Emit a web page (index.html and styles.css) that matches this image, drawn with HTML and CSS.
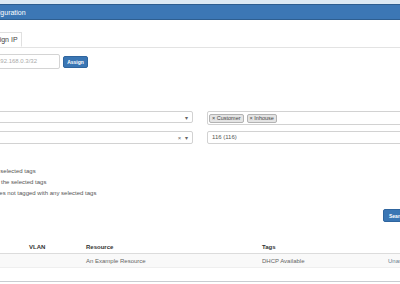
FILE: index.html
```html
<!DOCTYPE html>
<html>
<head>
<meta charset="utf-8">
<link rel="stylesheet" href="styles.css">
</head>
<body>
<div class="strip"></div>
<div class="panel">
  <div class="panel-head"><span class="title">Configuration</span></div>
  <div class="panel-body">
    <div class="tabs"><div class="tab">Assign IP</div></div>
    <div class="assign-row">
      <div class="ip-input">192.168.0.3/32</div>
      <button class="btn btn-assign">Assign</button>
    </div>
    <div class="filters">
      <div class="select"><span class="caret">▾</span></div>
      <div class="tagbox"><span class="tag">× Customer</span><span class="tag">× Inhouse</span></div>
      <div class="select select-clear"><span class="caret">× ▾</span></div>
      <div class="field">116 (116)</div>
    </div>
    <div class="radios">
      <div class="radio"><span class="dot"></span><span class="lbl">Have all selected tags</span></div>
      <div class="radio"><span class="dot"></span><span class="lbl">Some of the selected tags</span></div>
      <div class="radio"><span class="dot"></span><span class="lbl">Resources not tagged with any selected tags</span></div>
    </div>
    <div class="search-row"><button class="btn btn-search">Search</button></div>
    <table class="grid">
      <colgroup><col class="c1"><col class="c2"><col class="c3"><col class="c4"><col class="c5"></colgroup>
      <thead>
        <tr><th>IP Address</th><th>VLAN</th><th>Resource</th><th>Tags</th><th></th></tr>
      </thead>
      <tbody>
        <tr><td>192.168.0.3</td><td></td><td>An Example Resource</td><td>DHCP Available</td><td class="link">Unassign</td></tr>
      </tbody>
    </table>
  </div>
</div>
</body>
</html>
```

FILE: styles.css
```css
html, body {
  margin: 0;
  padding: 0;
  width: 400px;
  height: 284px;
  overflow: hidden;
  background: #fff;
  font-family: "Liberation Sans", Arial, sans-serif;
  color: #555;
}
.strip {
  height: 4px;
  background: #dce9f3;
}
.panel {
  border-bottom: 1px solid #c9ccd1;
  height: 278px;
  box-sizing: border-box;
}
.panel-head {
  height: 14px;
  background: #3c77b5;
  border-top: 1px solid #2e5e90;
  border-bottom: 1px solid #2e5e90;
  display: flex;
  align-items: center;
}
.title {
  color: #fff;
  font-size: 7px;
  margin-left: -16px;
}
.panel-body {
  padding-top: 12px;
}
.tabs {
  border-bottom: 1px solid #e3e3e3;
  display: flex;
  height: 15px;
}
.tab {
  margin-left: -20px;
  height: 15px;
  box-sizing: border-box;
  border: 1px solid #e0e0e0;
  border-bottom: 1px solid #fff;
  padding: 0 3px 0 7px;
  font-size: 7px;
  line-height: 14px;
  color: #444;
  background: #fff;
}
.assign-row {
  display: flex;
  align-items: center;
  gap: 3px;
  margin-top: 6px;
}
.ip-input {
  margin-left: -20px;
  width: 80px;
  height: 15px;
  box-sizing: border-box;
  border: 1px solid #d4d4d4;
  border-radius: 2px;
  font-size: 6px;
  line-height: 13px;
  padding-left: 16px;
  color: #aaa;
}
.btn {
  border: 1px solid #2f659e;
  background: #3a76b4;
  color: #fff;
  font-family: "Liberation Sans", Arial, sans-serif;
  font-weight: bold;
  border-radius: 2px;
  padding: 0;
  margin: 0;
}
.btn-assign {
  width: 25px;
  height: 12px;
  font-size: 5px;
}
.filters {
  margin-top: 42px;
  margin-left: -20px;
  width: 440px;
  display: grid;
  grid-template-columns: 1fr 1fr;
  column-gap: 14px;
  row-gap: 6px;
  align-items: start;
}
.select, .tagbox, .field {
  box-sizing: border-box;
  border: 1px solid #d2d2d2;
  border-radius: 2px;
  background: #fff;
}
.select {
  height: 12px;
  display: flex;
  justify-content: flex-end;
  align-items: center;
  padding-right: 3px;
}
.select-clear {
  height: 13px;
}
.caret {
  font-size: 6px;
  color: #666;
  letter-spacing: 1px;
}
.tagbox {
  height: 14px;
  display: flex;
  align-items: center;
  gap: 3px;
  padding-left: 1px;
}
.tag {
  font-size: 5.5px;
  line-height: 7px;
  padding: 0 2px;
  background: #e4e4e4;
  border: 1px solid #b3b3b3;
  border-radius: 2px;
  color: #444;
}
.field {
  height: 13px;
  font-size: 6px;
  line-height: 11px;
  padding-left: 4px;
  color: #555;
}
.radios {
  margin-top: 21px;
}
.radio {
  display: flex;
  align-items: center;
  height: 11px;
  margin-left: -34px;
  gap: 3px;
}
.dot {
  width: 6px;
  height: 6px;
  border: 1px solid #999;
  border-radius: 50%;
  flex: none;
}
.lbl {
  font-size: 6px;
  color: #555;
}
.search-row {
  margin-top: 11px;
  display: flex;
  justify-content: flex-end;
  margin-right: -15px;
}
.btn-search {
  width: 32px;
  height: 13px;
  font-size: 5px;
  text-align: left;
  padding-left: 5px;
}
.grid {
  margin-top: 19px;
  margin-left: -60px;
  width: 504px;
  table-layout: fixed;
  border-collapse: collapse;
  font-size: 6px;
}
.c1 { width: 85px; }
.c2 { width: 57px; }
.c3 { width: 176px; }
.c4 { width: 126px; }
.c5 { width: 60px; }
.grid th {
  text-align: left;
  font-weight: bold;
  color: #333;
  height: 12px;
  padding: 0 4px;
  border-bottom: 1px solid #dcdcdc;
}
.grid td {
  height: 13px;
  padding: 0 4px;
  color: #666;
  background: #f9f9f9;
  border-bottom: 1px solid #efefef;
  white-space: nowrap;
}
.grid td.link {
  color: #6a7d90;
}
```
